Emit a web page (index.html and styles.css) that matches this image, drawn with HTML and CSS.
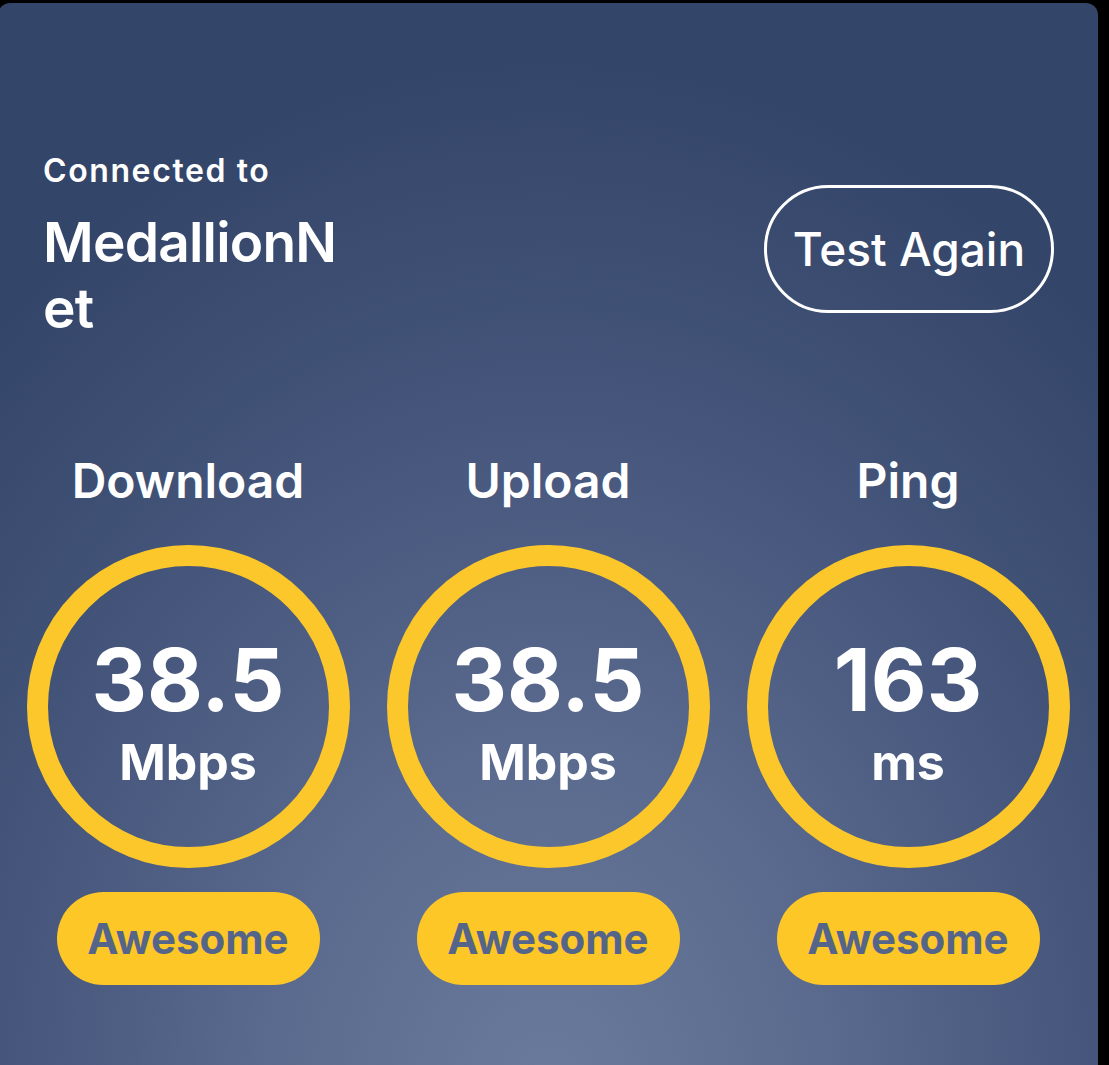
FILE: index.html
```html
<!DOCTYPE html>
<html lang="en">
<head>
  <meta charset="UTF-8">
  <title>Speed Test</title>
  <link rel="stylesheet" href="styles.css">
</head>
<body>
  <div class="card">
    <div class="header">
      <div class="network">
        <div class="label">Connected to</div>
        <div class="name">MedallionNet</div>
      </div>
      <button class="again">Test Again</button>
    </div>

    <div class="stats">
      <div class="stat">
        <div class="title">Download</div>
        <div class="ring">
          <div class="value">38.5</div>
          <div class="unit">Mbps</div>
        </div>
        <div class="badge">Awesome</div>
      </div>
      <div class="stat">
        <div class="title">Upload</div>
        <div class="ring">
          <div class="value">38.5</div>
          <div class="unit">Mbps</div>
        </div>
        <div class="badge">Awesome</div>
      </div>
      <div class="stat">
        <div class="title">Ping</div>
        <div class="ring">
          <div class="value">163</div>
          <div class="unit">ms</div>
        </div>
        <div class="badge">Awesome</div>
      </div>
    </div>
  </div>
</body>
</html>
```

FILE: styles.css
```css
body {
  margin: 0;
  background-color: #000;
  font-family: 'Inter', 'Noto Sans', sans-serif;
  color: white;
  height: 100vh;
  overflow: hidden;
}
.card {
  margin: 3px 0 0 -2px;
  width: 1100px;
  height: 1100px;
  box-sizing: border-box;
  padding: 0 10px;
  border-radius: 12px;
  background: radial-gradient(ellipse 75% 95% at 50% 100%, #6b7b9c 0%, #5a6a8e 35%, #46567c 65%, #334568 100%);
}
.header {
  display: flex;
  justify-content: space-between;
  align-items: center;
  padding: 150px 34px 0 35px;
}
.network {
  width: 296px;
}
.label {
  font-size: 32px;
  font-weight: 600;
  line-height: 36px;
  letter-spacing: 1.6px;
}
.name {
  font-size: 55px;
  font-weight: 600;
  line-height: 66px;
  letter-spacing: -0.8px;
  margin-top: 20px;
  word-break: break-all;
}
.again {
  font-family: 'Inter', 'Noto Sans', sans-serif;
  font-size: 46px;
  font-weight: 500;
  color: white;
  background: none;
  border: 3px solid white;
  border-radius: 64px;
  width: 290px;
  height: 128px;
  margin-top: 4px;
  cursor: pointer;
}
.stats {
  display: grid;
  grid-template-columns: repeat(3, 360px);
  margin-top: 112px;
}
.stat {
  display: flex;
  flex-direction: column;
  align-items: center;
}
.title {
  font-size: 48px;
  font-weight: 600;
  line-height: 56px;
}
.ring {
  margin-top: 36px;
  width: 323px;
  height: 323px;
  box-sizing: border-box;
  border: 21px solid #fcc72a;
  border-radius: 50%;
  display: flex;
  flex-direction: column;
  align-items: center;
  justify-content: center;
}
.value {
  font-size: 86px;
  font-weight: 700;
  line-height: 90px;
  margin-top: 11px;
}
.unit {
  font-size: 50px;
  font-weight: 700;
  line-height: 56px;
  margin-top: 9px;
}
.badge {
  margin-top: 24px;
  width: 263px;
  height: 93px;
  border-radius: 47px;
  background-color: #fdc727;
  color: #55658a;
  font-size: 42px;
  font-weight: 700;
  display: flex;
  align-items: center;
  justify-content: center;
}
```
